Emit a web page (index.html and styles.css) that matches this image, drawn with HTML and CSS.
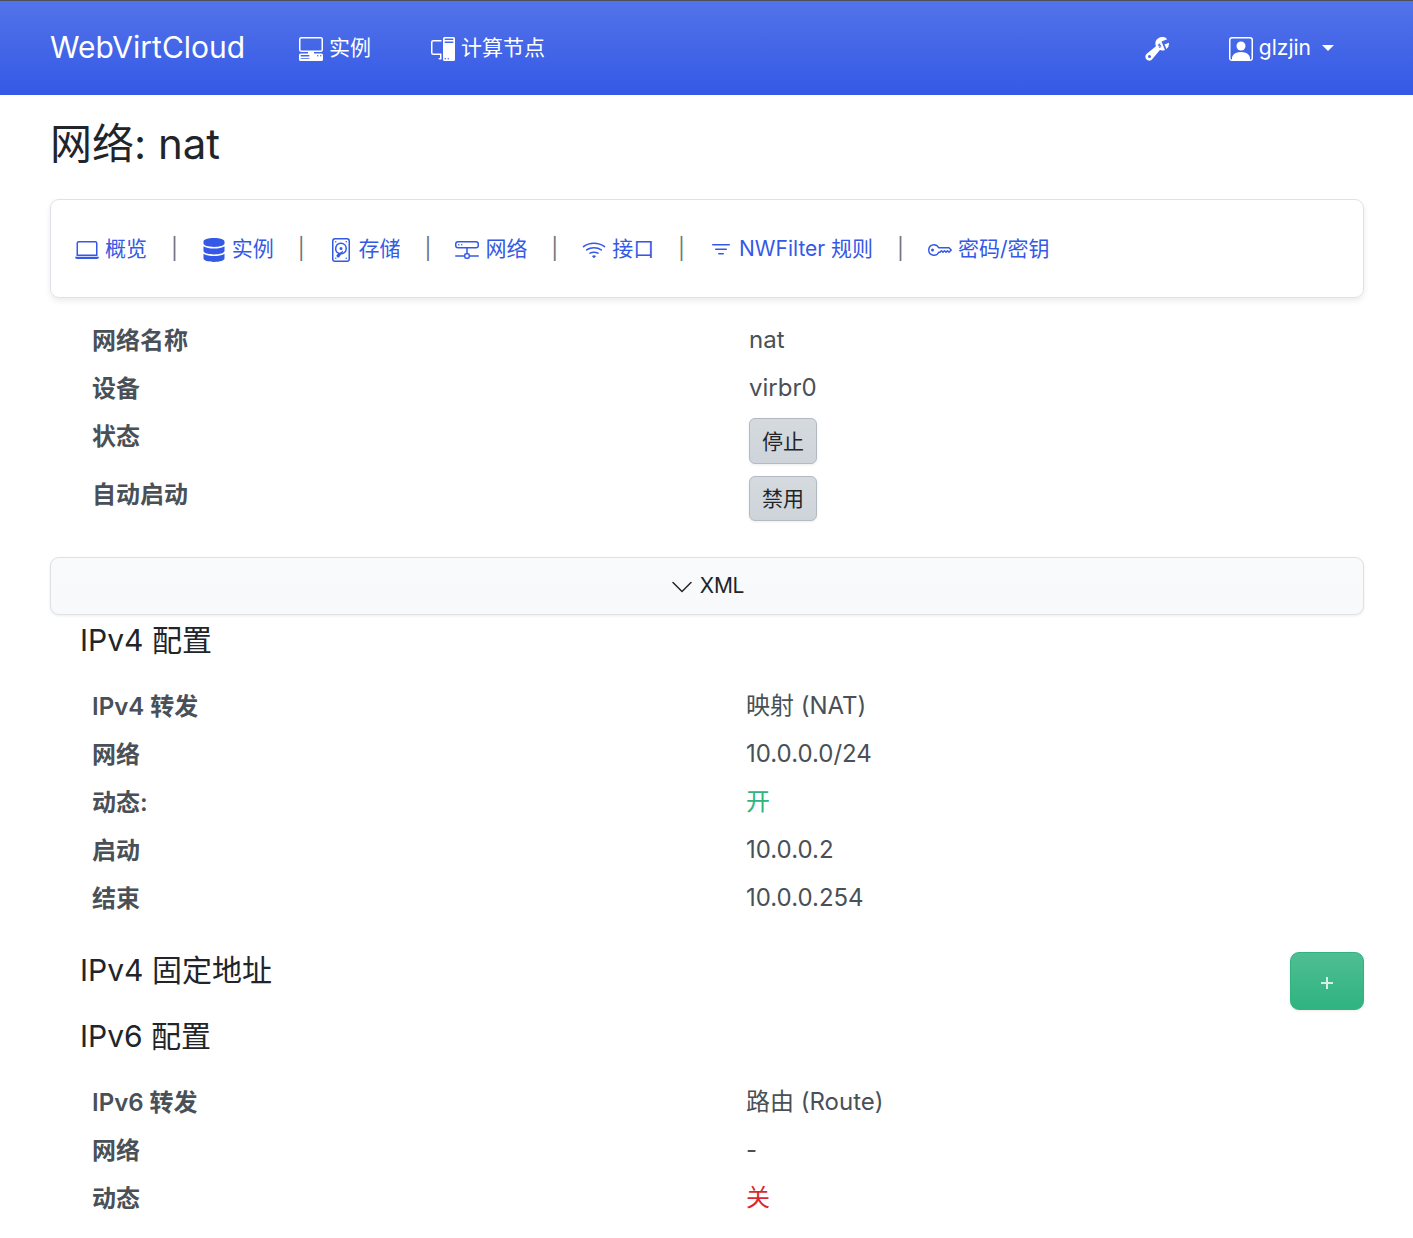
FILE: index.html
```html
<!DOCTYPE html>
<html lang="zh-CN">
<head>
    <meta charset="UTF-8">
    <meta name="viewport" content="width=device-width, initial-scale=1.0">
    <title>WebVirtCloud</title>
    <link rel="stylesheet" href="styles.css">
</head>
<body>
    <nav class="navbar">
        <a class="brand" href="#">WebVirtCloud</a>
        <a class="nav-link nav-instances" href="#">
            <svg class="icon" viewBox="0 0 16 16"><path d="M1.5 0A1.5 1.5 0 0 0 0 1.5v7A1.5 1.5 0 0 0 1.5 10H6v1H1a1 1 0 0 0-1 1v3a1 1 0 0 0 1 1h14a1 1 0 0 0 1-1v-3a1 1 0 0 0-1-1h-5v-1h4.5A1.5 1.5 0 0 0 16 8.5v-7A1.5 1.5 0 0 0 14.5 0h-13Zm0 1h13a.5.5 0 0 1 .5.5v7a.5.5 0 0 1-.5.5h-13a.5.5 0 0 1-.5-.5v-7a.5.5 0 0 1 .5-.5ZM12 12.5a.5.5 0 1 1 1 0 .5.5 0 0 1-1 0Zm2 0a.5.5 0 1 1 1 0 .5.5 0 0 1-1 0ZM1.5 12h5a.5.5 0 0 1 0 1h-5a.5.5 0 0 1 0-1ZM1 14.25a.25.25 0 0 1 .25-.25h5.5a.25.25 0 1 1 0 .5h-5.5a.25.25 0 0 1-.25-.25Z"/></svg>
            <span>实例</span>
        </a>
        <a class="nav-link nav-computes" href="#">
            <svg class="icon" viewBox="0 0 16 16"><path d="M8 1a1 1 0 0 1 1-1h6a1 1 0 0 1 1 1v14a1 1 0 0 1-1 1H9a1 1 0 0 1-1-1V1Zm1 13.5a.5.5 0 1 0 1 0 .5.5 0 0 0-1 0Zm2 0a.5.5 0 1 0 1 0 .5.5 0 0 0-1 0ZM9.5 1a.5.5 0 0 0 0 1h5a.5.5 0 0 0 0-1h-5ZM9 3.5a.5.5 0 0 0 .5.5h5a.5.5 0 0 0 0-1h-5a.5.5 0 0 0-.5.5ZM1.5 2A1.5 1.5 0 0 0 0 3.5v7A1.5 1.5 0 0 0 1.5 12H6v2h-.5a.5.5 0 0 0 0 1H7v-4H1.5a.5.5 0 0 1-.5-.5v-7a.5.5 0 0 1 .5-.5H7V2H1.5Z"/></svg>
            <span>计算节点</span>
        </a>
        <a class="nav-link nav-settings" href="#">
            <svg class="icon" viewBox="0 0 16 16"><path d="M16 4.5a4.492 4.492 0 0 1-1.703 3.526L13 5l2.959-1.11c.027.2.041.403.041.61Z"/><path d="M11.5 9c.653 0 1.273-.139 1.833-.39L12 5.5 11 3l3.826-1.53A4.5 4.5 0 0 0 7.29 6.092l-6.116 5.096a2.583 2.583 0 1 0 3.638 3.638L9.908 8.71A4.49 4.49 0 0 0 11.5 9Zm-1.292-4.361-.596.893.809-.27a.25.25 0 0 1 .287.377l-.596.893.809-.27.158.475-1.5.5a.25.25 0 0 1-.287-.376l.596-.893-.809.27a.25.25 0 0 1-.287-.377l.596-.893-.809.27-.158-.475 1.5-.5a.25.25 0 0 1 .287.376ZM3 14a1 1 0 1 1 0-2 1 1 0 0 1 0 2Z"/></svg>
        </a>
        <a class="nav-link nav-user" href="#">
            <svg class="icon" viewBox="0 0 16 16"><path d="M11 6a3 3 0 1 1-6 0 3 3 0 0 1 6 0z"/><path d="M2 0a2 2 0 0 0-2 2v12a2 2 0 0 0 2 2h12a2 2 0 0 0 2-2V2a2 2 0 0 0-2-2H2zm12 1a1 1 0 0 1 1 1v12a1 1 0 0 1-1 1v-1c0-1-1-4-6-4s-6 3-6 4v1a1 1 0 0 1-1-1V2a1 1 0 0 1 1-1h12z"/></svg>
            <span>glzjin</span>
            <i class="caret"></i>
        </a>
    </nav>

    <main class="container">
        <h1 class="page-title">网络: nat</h1>

        <ol class="breadcrumb">
            <li><a href="#">
                <svg class="icon" viewBox="0 0 16 16"><path d="M13.5 3a.5.5 0 0 1 .5.5V11H2V3.5a.5.5 0 0 1 .5-.5h11zm-11-1A1.5 1.5 0 0 0 1 3.5V12h14V3.5A1.5 1.5 0 0 0 13.5 2h-11zM0 12.5h16a1.5 1.5 0 0 1-1.5 1.5h-13A1.5 1.5 0 0 1 0 12.5z"/></svg>
                <span>概览</span>
            </a></li>
            <li><a href="#">
                <svg class="icon" viewBox="-32 0 512 512"><path d="M448 73.143v45.714C448 159.143 347.667 192 224 192S0 159.143 0 118.857V73.143C0 32.857 100.333 0 224 0s224 32.857 224 73.143zM448 176v102.857C448 319.143 347.667 352 224 352S0 319.143 0 278.857V176c48.125 33.143 136.208 48.572 224 48.572S399.874 209.143 448 176zm0 160v102.857C448 479.143 347.667 512 224 512S0 479.143 0 438.857V336c48.125 33.143 136.208 48.572 224 48.572S399.874 369.143 448 336z"/></svg>
                <span>实例</span>
            </a></li>
            <li><a href="#">
                <svg class="icon" viewBox="0 0 16 16"><path d="M12 2.5a.5.5 0 1 1-1 0 .5.5 0 0 1 1 0Zm0 11a.5.5 0 1 1-1 0 .5.5 0 0 1 1 0Zm-7.5.5a.5.5 0 1 0 0-1 .5.5 0 0 0 0 1ZM5 2.5a.5.5 0 1 1-1 0 .5.5 0 0 1 1 0ZM8 8a1 1 0 1 0 0-2 1 1 0 0 0 0 2Z"/><path d="M12 7a4 4 0 0 1-3.937 4c-.537.813-1.02 1.515-1.181 1.677a1.102 1.102 0 0 1-1.56-1.559c.1-.098.396-.314.795-.588A4 4 0 0 1 8 3a4 4 0 0 1 4 4Zm-1 0a3 3 0 1 0-3.891 2.865c.667-.44 1.396-.91 1.955-1.268.224-.144.483.115.34.34l-.62.96A3.001 3.001 0 0 0 11 7Z"/><path d="M2 2a2 2 0 0 1 2-2h8a2 2 0 0 1 2 2v12a2 2 0 0 1-2 2H4a2 2 0 0 1-2-2V2Zm2-1a1 1 0 0 0-1 1v12a1 1 0 0 0 1 1h8a1 1 0 0 0 1-1V2a1 1 0 0 0-1-1H4Z"/></svg>
                <span>存储</span>
            </a></li>
            <li><a href="#">
                <svg class="icon" viewBox="0 0 16 16"><path d="M4.5 5a.5.5 0 1 0 0-1 .5.5 0 0 0 0 1zM3 4.5a.5.5 0 1 1-1 0 .5.5 0 0 1 1 0z"/><path d="M0 4a2 2 0 0 1 2-2h12a2 2 0 0 1 2 2v1a2 2 0 0 1-2 2H8.5v3a1.5 1.5 0 0 1 1.5 1.5h5.5a.5.5 0 0 1 0 1H10A1.5 1.5 0 0 1 8.5 14h-1A1.5 1.5 0 0 1 6 12.5H.5a.5.5 0 0 1 0-1H6A1.5 1.5 0 0 1 7.5 10V7H2a2 2 0 0 1-2-2V4zm1 0v1a1 1 0 0 0 1 1h12a1 1 0 0 0 1-1V4a1 1 0 0 0-1-1H2a1 1 0 0 0-1 1zm6 7.5v1a.5.5 0 0 0 .5.5h1a.5.5 0 0 0 .5-.5v-1a.5.5 0 0 0-.5-.5h-1a.5.5 0 0 0-.5.5z"/></svg>
                <span>网络</span>
            </a></li>
            <li><a href="#">
                <svg class="icon" viewBox="0 0 16 16"><path d="M15.384 6.115a.485.485 0 0 0-.047-.736A12.444 12.444 0 0 0 8 3C5.259 3 2.723 3.882.663 5.379a.485.485 0 0 0-.048.736.518.518 0 0 0 .668.05A11.448 11.448 0 0 1 8 4c2.507 0 4.827.802 6.716 2.164.205.148.49.13.668-.049z"/><path d="M13.229 8.271a.482.482 0 0 0-.063-.745A9.455 9.455 0 0 0 8 6c-1.905 0-3.68.56-5.166 1.526a.48.48 0 0 0-.063.745.525.525 0 0 0 .652.065A8.46 8.46 0 0 1 8 7a8.46 8.46 0 0 1 4.576 1.336c.206.132.48.108.653-.065zm-2.183 2.183c.226-.226.185-.605-.1-.75A6.473 6.473 0 0 0 8 9c-1.06 0-2.062.254-2.946.704-.285.145-.326.524-.1.75l.015.015c.16.16.407.19.611.09A5.478 5.478 0 0 1 8 10c.868 0 1.69.201 2.42.56.203.1.45.07.61-.091l.016-.015zM9.06 12.44c.196-.196.198-.52-.04-.66A1.99 1.99 0 0 0 8 11.5a1.99 1.99 0 0 0-1.02.28c-.238.14-.236.464-.04.66l.706.706a.5.5 0 0 0 .707 0l.707-.707z"/></svg>
                <span>接口</span>
            </a></li>
            <li><a href="#">
                <svg class="icon" viewBox="0 0 16 16"><path d="M6 10.5a.5.5 0 0 1 .5-.5h3a.5.5 0 0 1 0 1h-3a.5.5 0 0 1-.5-.5zm-2-3a.5.5 0 0 1 .5-.5h7a.5.5 0 0 1 0 1h-7a.5.5 0 0 1-.5-.5zm-2-3a.5.5 0 0 1 .5-.5h11a.5.5 0 0 1 0 1h-11a.5.5 0 0 1-.5-.5z"/></svg>
                <span>NWFilter 规则</span>
            </a></li>
            <li><a href="#">
                <svg class="icon" viewBox="0 0 16 16"><path d="M0 8a4 4 0 0 1 7.465-2H14a.5.5 0 0 1 .354.146l1.5 1.5a.5.5 0 0 1 0 .708l-1.5 1.5a.5.5 0 0 1-.708 0L13 9.207l-.646.647a.5.5 0 0 1-.708 0L11 9.207l-.646.647a.5.5 0 0 1-.708 0L9 9.207l-.646.647A.5.5 0 0 1 8 10h-.535A4 4 0 0 1 0 8zm4-3a3 3 0 1 0 2.712 4.285A.5.5 0 0 1 7.163 9h.63l.853-.854a.5.5 0 0 1 .708 0l.646.647.646-.647a.5.5 0 0 1 .708 0l.646.647.646-.647a.5.5 0 0 1 .708 0l.646.647.793-.793-1-1h-6.63a.5.5 0 0 1-.451-.285A3 3 0 0 0 4 5z"/><path d="M4 8a1 1 0 1 1-2 0 1 1 0 0 1 2 0z"/></svg>
                <span>密码/密钥</span>
            </a></li>
        </ol>

        <dl class="details summary">
            <dt>网络名称</dt>
            <dd>nat</dd>
            <dt>设备</dt>
            <dd>virbr0</dd>
            <dt>状态</dt>
            <dd><button class="btn-secondary">停止</button></dd>
            <dt>自动启动</dt>
            <dd><button class="btn-secondary">禁用</button></dd>
        </dl>

        <button class="xml-toggle">
            <svg class="icon" viewBox="0 0 16 16"><path d="M1.646 4.646a.5.5 0 0 1 .708 0L8 10.293l5.646-5.647a.5.5 0 0 1 .708.708l-6 6a.5.5 0 0 1-.708 0l-6-6a.5.5 0 0 1 0-.708z"/></svg>
            <span>XML</span>
        </button>

        <h3 class="section-title">IPv4 配置</h3>
        <dl class="details">
            <dt>IPv4 转发</dt>
            <dd>映射 (NAT)</dd>
            <dt>网络</dt>
            <dd>10.0.0.0/24</dd>
            <dt>动态:</dt>
            <dd class="text-success">开</dd>
            <dt>启动</dt>
            <dd>10.0.0.2</dd>
            <dt>结束</dt>
            <dd>10.0.0.254</dd>
        </dl>

        <div class="fixed-header">
            <h3 class="section-title">IPv4 固定地址</h3>
            <button class="btn-add">
                <svg viewBox="0 0 12 12"><path d="M0 5h12v2H0zM5 0h2v12H5z"/></svg>
            </button>
        </div>

        <h3 class="section-title">IPv6 配置</h3>
        <dl class="details">
            <dt>IPv6 转发</dt>
            <dd>路由 (Route)</dd>
            <dt>网络</dt>
            <dd>-</dd>
            <dt>动态</dt>
            <dd class="text-danger">关</dd>
        </dl>
    </main>
</body>
</html>
```

FILE: styles.css
```css
* {
    box-sizing: border-box;
}
body {
    font-family: Inter, "Noto Sans CJK SC", sans-serif;
    font-size: 24px;
    line-height: 36px;
    margin: 0;
    color: #495057;
    background-color: #fff;
}
a {
    text-decoration: none;
}
button {
    font-family: inherit;
    cursor: pointer;
}
.icon {
    width: 24px;
    height: 24px;
    flex: none;
    fill: currentColor;
}

/* Top bar */
.navbar {
    display: flex;
    align-items: center;
    height: 95px;
    padding: 0 79px 0 50px;
    border-top: 1px solid #495057;
    background-image: linear-gradient(#5373e9, #3459e6);
}
.brand {
    width: 249px;
    padding-bottom: 2px;
    font-size: 30px;
    color: #fff;
}
.nav-link {
    display: flex;
    align-items: center;
    font-size: 21px;
    color: #fff;
}
.nav-link .icon {
    margin-top: 2px;
}
.nav-link span {
    margin-left: 6px;
}
.nav-computes {
    margin-left: 60px;
}
.nav-settings {
    margin-left: auto;
}
.nav-user {
    margin-left: 60px;
}
.caret {
    margin-left: 11px;
    border-top: 6px solid #fff;
    border-left: 6px solid transparent;
    border-right: 6px solid transparent;
}

.container {
    padding: 0 49px 0 50px;
}
.page-title {
    margin: 24px 0 30px;
    font-size: 42px;
    font-weight: 400;
    line-height: 50px;
    color: #212529;
}

/* Section menu */
.breadcrumb {
    display: flex;
    align-items: center;
    height: 99px;
    margin: 0;
    padding: 0 24px;
    list-style: none;
    font-size: 21px;
    border: 1px solid #dee2e6;
    border-radius: 9px;
    box-shadow: 0 3px 6px rgba(0, 0, 0, 0.08);
}
.breadcrumb li {
    display: flex;
    align-items: center;
}
.breadcrumb li + li::before {
    content: "|";
    width: 54.8px;
    text-align: center;
    color: #6c757d;
}
.breadcrumb a {
    display: flex;
    align-items: center;
    color: #3459e6;
}
.breadcrumb .icon {
    margin-top: 2px;
}
.breadcrumb span {
    margin-left: 6px;
}

/* Key / value lists */
.details {
    display: grid;
    grid-template-columns: 654px 1fr;
    row-gap: 12px;
    margin: 0 0 0 42px;
}
.details dt {
    margin-bottom: -1px;
    padding-top: 1px;
    font-weight: 600;
}
.details dd {
    margin: 0;
}
.summary {
    grid-template-columns: 657px 1fr;
    margin-top: 24px;
}
.details .text-success {
    color: #2fb380;
}
.details .text-danger {
    color: #da292e;
}
.btn-secondary {
    display: block;
    width: 68px;
    height: 46px;
    padding: 0 0 3px;
    font-size: 21px;
    color: #212529;
    border: 1px solid #b4bac1;
    border-radius: 6px;
    background-image: linear-gradient(#d5dade, #ced4da);
    box-shadow: 0 1px 3px rgba(0, 0, 0, 0.08);
}
.summary dd:last-child .btn-secondary {
    height: 45px;
}
.xml-toggle {
    display: flex;
    align-items: center;
    justify-content: center;
    gap: 6px;
    width: 100%;
    height: 58px;
    margin-top: 36px;
    padding: 0 0 1px;
    font-size: 21px;
    color: #212529;
    border: 1px solid #dee2e6;
    border-radius: 9px;
    background-image: linear-gradient(#f9fafb, #f8f9fa);
    box-shadow: 0 1px 3px rgba(0, 0, 0, 0.08);
}
.xml-toggle .icon {
    margin-top: 3px;
}
.xml-toggle span {
    letter-spacing: -0.3px;
}
.section-title {
    margin: 7px 0 30px 30px;
    font-size: 30px;
    font-weight: 400;
    line-height: 36px;
    color: #212529;
}
.fixed-header {
    display: flex;
    justify-content: space-between;
    margin-top: 36px;
}
.fixed-header .section-title {
    margin: 0 0 0 30px;
}
.fixed-header + .section-title {
    margin-top: 8px;
}
.btn-add {
    display: flex;
    align-items: center;
    justify-content: center;
    width: 74px;
    height: 58px;
    padding: 4px 0 0;
    border: 1px solid #2fb380;
    border-radius: 9px;
    background-image: linear-gradient(#4fbe93, #2fb380);
    box-shadow: 0 1px 3px rgba(0, 0, 0, 0.08);
}
.btn-add svg {
    width: 12px;
    height: 12px;
    fill: #d5f0e6;
}
```
